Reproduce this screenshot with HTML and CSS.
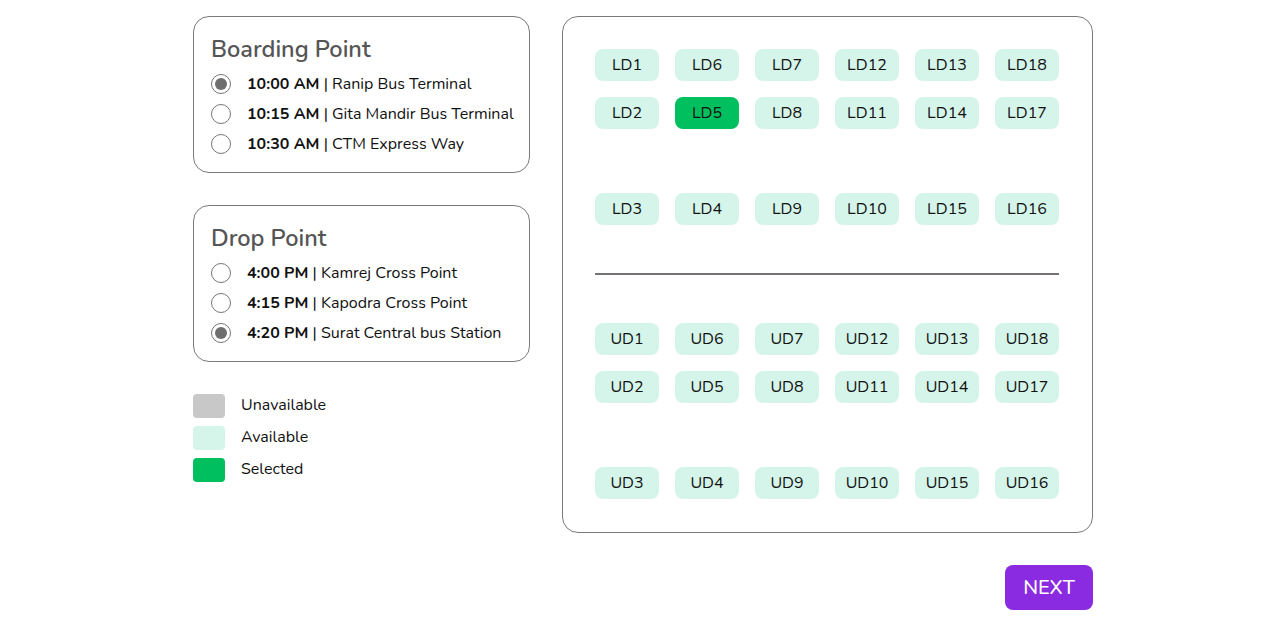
FILE: index.html
```html
<!DOCTYPE html>
<html>
<head>
<meta charset="utf-8">
<link rel="stylesheet" href="styles.css">
</head>
<body>
<div class="page">
  <div class="layout">
    <div class="left">
      <section class="point-card">
        <h2 class="point-title">Boarding Point</h2>
        <label class="opt"><span class="radio checked"></span><span class="opt-text"><b>10:00 AM</b> | Ranip Bus Terminal</span></label>
        <label class="opt"><span class="radio"></span><span class="opt-text"><b>10:15 AM</b> | Gita Mandir Bus Terminal</span></label>
        <label class="opt"><span class="radio"></span><span class="opt-text"><b>10:30 AM</b> | CTM Express Way</span></label>
      </section>
      <section class="point-card">
        <h2 class="point-title">Drop Point</h2>
        <label class="opt"><span class="radio"></span><span class="opt-text"><b>4:00 PM</b> | Kamrej Cross Point</span></label>
        <label class="opt"><span class="radio"></span><span class="opt-text"><b>4:15 PM</b> | Kapodra Cross Point</span></label>
        <label class="opt"><span class="radio checked"></span><span class="opt-text"><b>4:20 PM</b> | Surat Central bus Station</span></label>
      </section>
      <div class="legend">
        <div class="legend-row"><span class="swatch unavailable"></span><span class="legend-label">Unavailable</span></div>
        <div class="legend-row"><span class="swatch available"></span><span class="legend-label">Available</span></div>
        <div class="legend-row"><span class="swatch selected"></span><span class="legend-label">Selected</span></div>
      </div>
    </div>
    <div class="right">
      <div class="seat-card">
        <div class="deck">
          <div class="seat">LD1</div><div class="seat">LD6</div><div class="seat">LD7</div><div class="seat">LD12</div><div class="seat">LD13</div><div class="seat">LD18</div>
          <div class="seat">LD2</div><div class="seat selected">LD5</div><div class="seat">LD8</div><div class="seat">LD11</div><div class="seat">LD14</div><div class="seat">LD17</div>
          <div class="aisle"></div>
          <div class="seat">LD3</div><div class="seat">LD4</div><div class="seat">LD9</div><div class="seat">LD10</div><div class="seat">LD15</div><div class="seat">LD16</div>
        </div>
        <hr class="divider">
        <div class="deck">
          <div class="seat">UD1</div><div class="seat">UD6</div><div class="seat">UD7</div><div class="seat">UD12</div><div class="seat">UD13</div><div class="seat">UD18</div>
          <div class="seat">UD2</div><div class="seat">UD5</div><div class="seat">UD8</div><div class="seat">UD11</div><div class="seat">UD14</div><div class="seat">UD17</div>
          <div class="aisle"></div>
          <div class="seat">UD3</div><div class="seat">UD4</div><div class="seat">UD9</div><div class="seat">UD10</div><div class="seat">UD15</div><div class="seat">UD16</div>
        </div>
      </div>
      <div class="actions">
        <button class="next-btn">NEXT</button>
      </div>
    </div>
  </div>
</div>
</body>
</html>
```

FILE: styles.css
```css
* { box-sizing: border-box; }
html, body { margin: 0; padding: 0; background: #fff; }
body {
  font-family: "Nunito", "Lato", "Open Sans", sans-serif;
  color: #111;
  font-size: 16px;
}
.page {
  padding: 16px 0 0 193px;
}
.layout {
  display: flex;
  gap: 32px;
  align-items: flex-start;
}
.left {
  width: 337px;
  display: flex;
  flex-direction: column;
  gap: 32px;
}
.point-card {
  border: 1px solid #7a7a7a;
  border-radius: 16px;
  padding: 16px 17px 14px;
  height: 157px;
}
.point-title {
  margin: 0 0 4px;
  font-size: 23.5px;
  font-weight: 600;
  color: #555;
  line-height: 32px;
  white-space: nowrap;
}
.opt {
  display: flex;
  align-items: center;
  gap: 16px;
  height: 30px;
  font-size: 16px;
  white-space: nowrap;
}
.opt b { font-weight: 700; }
.radio {
  width: 20px;
  height: 20px;
  border: 1.5px solid #767676;
  border-radius: 50%;
  flex: none;
  display: flex;
  align-items: center;
  justify-content: center;
}
.radio.checked::after {
  content: "";
  width: 12px;
  height: 12px;
  border-radius: 50%;
  background: #6e6e6e;
}
.legend {
  display: flex;
  flex-direction: column;
  gap: 8px;
}
.legend-row {
  display: flex;
  align-items: flex-start;
  gap: 16px;
  height: 24px;
  font-size: 16px;
}
.legend-label {
  line-height: 22px;
}
.swatch {
  width: 32px;
  height: 24px;
  border-radius: 4px;
}
.swatch.unavailable { background: #c8c8c8; }
.swatch.available { background: #d5f5ea; }
.swatch.selected { background: #00bf5f; }
.right {
  width: 531px;
  display: flex;
  flex-direction: column;
  gap: 32px;
}
.seat-card {
  border: 1px solid #7a7a7a;
  border-radius: 16px;
  padding: 32px;
  height: 517px;
}
.deck {
  display: grid;
  grid-template-columns: repeat(6, 64px);
  grid-auto-rows: 32px;
  gap: 16px;
}
.aisle { grid-column: 1 / -1; }
.seat {
  background: #d5f5ea;
  border-radius: 8px;
  display: flex;
  align-items: center;
  justify-content: center;
  font-size: 16px;
  color: #111;
}
.seat.selected { background: #00bf5f; }
.divider {
  border: none;
  height: 2px;
  background: #777272;
  margin: 48px 0;
  width: 464px;
}
.actions {
  display: flex;
  justify-content: flex-end;
}
.next-btn {
  background: #8a2be2;
  color: #fff;
  border: none;
  border-radius: 8px;
  width: 88px;
  height: 45px;
  font-family: inherit;
  font-size: 20px;
  font-weight: 500;
  padding: 0;
}
```
